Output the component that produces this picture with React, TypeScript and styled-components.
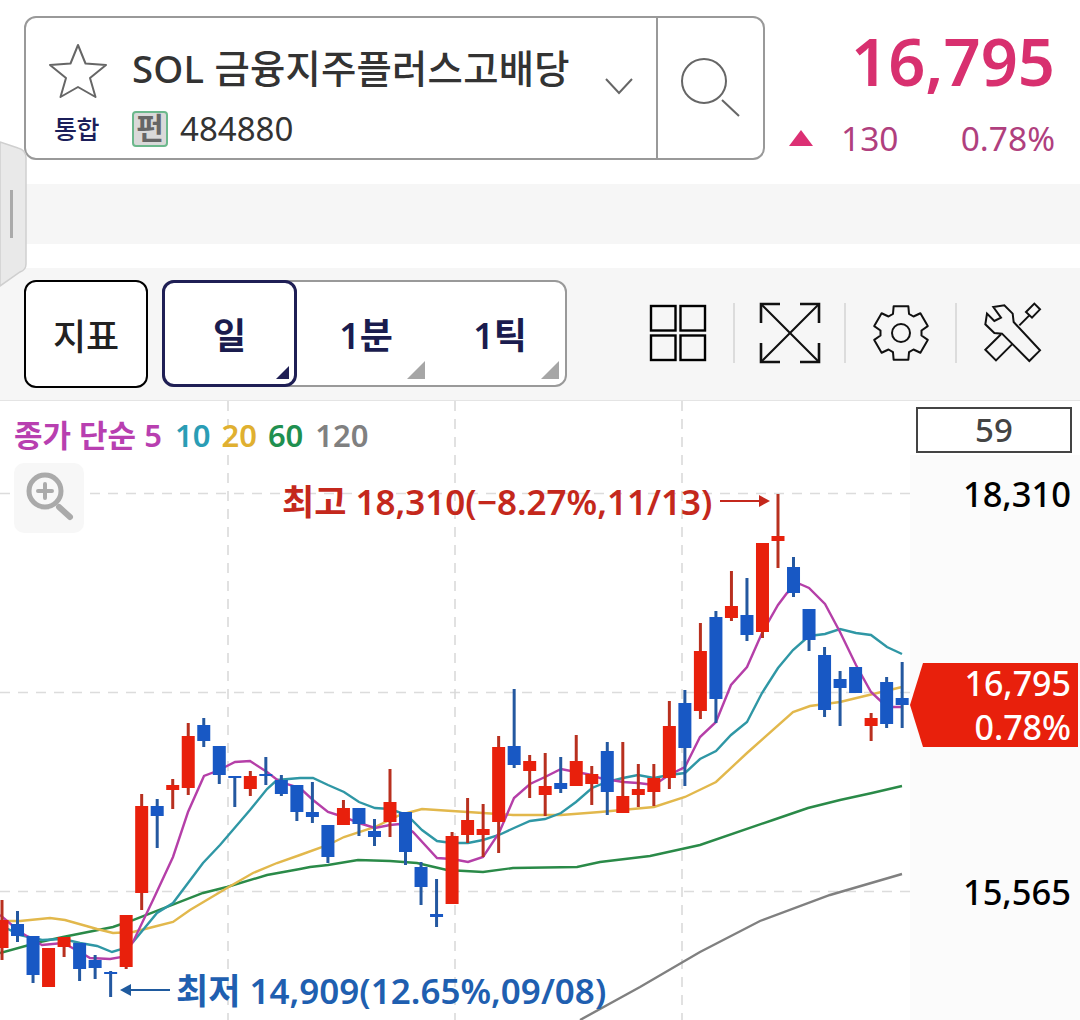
import React from "react";
import styled, { createGlobalStyle } from "styled-components";

const FONT = `"Noto Sans", "Noto Sans CJK KR", sans-serif`;
const RED = "#e8200c";
const BLUE = "#1858c4";

const GlobalStyle = createGlobalStyle`
  html, body {
    margin: 0;
    padding: 0;
    background: #fff;
    font-family: ${FONT};
  }
`;

// wick top, wick bottom, body top, body bottom, colour
type Candle = [number, number, number, number, "r" | "b"];

const CANDLES: Candle[] = [
  [900, 960, 920, 948, "r"], [911, 942, 924, 936, "b"], [936, 983, 936, 975, "b"],
  [948, 987, 948, 987, "r"], [937, 957, 937, 947, "r"], [943, 981, 943, 969, "b"],
  [955, 979, 960, 968, "b"], [971, 997, 972, 974, "b"], [915, 969, 915, 967, "r"],
  [794, 910, 806, 893, "r"], [799, 848, 806, 816, "b"], [779, 809, 785, 790, "r"],
  [723, 795, 736, 788, "r"], [718, 747, 725, 741, "b"], [746, 784, 746, 775, "b"],
  [776, 807, 776, 778, "b"], [771, 796, 776, 789, "r"], [757, 785, 774, 776, "b"],
  [775, 796, 780, 794, "b"], [785, 821, 785, 812, "b"], [782, 823, 812, 817, "b"],
  [825, 863, 825, 857, "b"], [800, 825, 808, 825, "r"], [808, 836, 808, 824, "b"],
  [819, 846, 831, 837, "b"], [769, 837, 802, 822, "r"], [812, 865, 812, 852, "b"],
  [862, 905, 867, 887, "b"], [879, 927, 914, 917, "b"], [832, 904, 836, 904, "r"],
  [798, 843, 820, 835, "r"], [804, 857, 829, 835, "r"], [736, 853, 747, 822, "r"],
  [689, 768, 746, 765, "b"], [755, 798, 761, 771, "r"], [753, 816, 786, 795, "r"],
  [757, 793, 783, 789, "b"], [735, 786, 761, 786, "r"], [766, 805, 774, 784, "r"],
  [742, 815, 751, 792, "b"], [742, 813, 796, 813, "r"], [764, 807, 789, 795, "r"],
  [764, 806, 778, 792, "r"], [701, 789, 726, 778, "r"], [690, 786, 703, 748, "b"],
  [623, 719, 651, 711, "r"], [611, 723, 617, 699, "b"], [571, 621, 606, 618, "r"],
  [578, 641, 615, 635, "b"], [543, 638, 543, 632, "r"], [494, 568, 536, 541, "r"],
  [557, 597, 567, 593, "b"], [609, 651, 609, 640, "b"], [647, 717, 655, 710, "b"],
  [671, 726, 679, 688, "b"], [667, 693, 667, 693, "b"], [713, 741, 718, 726, "r"],
  [677, 728, 682, 724, "b"], [662, 728, 698, 705, "b"],
];

const MA5 =
  "0,915 20,932 42,945 63,943 80,952 90,958 110,959 122,957 133,942 153,900 173,857 188,812 204,776 217,771 235,762 250,761 267,772 280,782 300,788 313,800 328,812 344,817 359,823 375,828 390,825 400,824 413,832 437,858 452,859 468,862 483,857 499,833 514,798 530,784 545,777 561,769 576,772 592,775 600,778 623,782 638,783 654,785 669,775 685,767 700,737 716,722 731,685 747,667 762,633 778,605 787,593 800,584 809,588 825,604 840,632 856,665 871,692 887,707 902,707";
const MA10 =
  "0,925 20,935 42,940 63,939 80,943 97,946 112,952 122,949 133,942 157,913 173,903 203,863 220,845 250,810 267,789 277,780 300,778 313,778 328,785 344,792 359,802 375,808 390,809 407,815 422,830 437,841 452,843 468,843 483,840 499,835 514,828 530,821 545,819 561,813 576,802 592,788 607,782 623,778 638,775 654,778 669,775 685,773 700,759 716,751 731,735 747,722 762,693 778,668 793,650 809,636 825,634 840,629 856,633 871,635 887,647 902,654";
const MA20 =
  "0,921 20,921 50,918 65,920 97,929 113,933 133,932 153,927 173,922 190,910 227,888 253,873 277,863 300,855 328,845 344,837 375,827 400,815 422,809 452,811 483,813 513,815 561,815 600,812 654,807 685,797 716,782 747,753 793,712 810,706 840,702 902,687";
const MA60 =
  "0,953 40,942 63,937 113,927 133,920 203,893 227,887 267,875 300,869 310,867 328,865 358,860 390,861 417,863 447,870 483,872 513,868 577,867 600,862 650,856 700,845 773,820 808,808 840,800 872,793 902,786";
const MA120 = "580,1020 640,987 700,952 760,921 830,895 902,874";

const gearPath = () => {
  const pts: string[] = [];
  for (let i = 0; i < 6; i++) {
    const a = -Math.PI / 2 + (i * Math.PI) / 3;
    [
      [62, -0.4],
      [83, -0.27],
      [83, 0.27],
      [62, 0.4],
    ].forEach(([r, d]) => {
      pts.push(`${(108 + r * Math.cos(a + d)).toFixed(1)} ${(108 + r * Math.sin(a + d)).toFixed(1)}`);
    });
  }
  return `M${pts.join("L")}Z`;
};

const Page = styled.div`
  width: 1080px;
  height: 1020px;
  position: relative;
  overflow: hidden;
  background: #fff;
`;

const Header = styled.header`
  display: flex;
  height: 184px;
  box-sizing: border-box;
  padding: 16px 25px 0 24px;
`;

const SearchBox = styled.div`
  width: 741px;
  height: 144px;
  box-sizing: border-box;
  border: 2px solid #999;
  border-radius: 12px;
  display: flex;
  background: #fff;
`;

const StockInfo = styled.div`
  flex: 1;
  display: grid;
  grid-template-columns: 106px 1fr 64px;
  grid-template-rows: 93px 1fr;
`;

const StarCell = styled.div`
  padding: 25px 0 0 22px;
`;

const StockName = styled.div`
  font-size: 38.4px;
  line-height: 50px;
  font-weight: 500;
  color: #333;
  padding-top: 25px;
  white-space: nowrap;
  letter-spacing: 0.2px;
`;

const ChevronCell = styled.div`
  display: flex;
  align-items: flex-end;
  padding: 0 0 16px 12px;
`;

const MarketLabel = styled.div`
  font-size: 25px;
  font-weight: 500;
  color: #1b1e5a;
  padding: 0 0 0 28px;
  line-height: 40px;
  margin-top: -2px;
  letter-spacing: -0.5px;
`;

const CodeRow = styled.div`
  display: flex;
  align-items: flex-start;
  gap: 12px;
`;

const Badge = styled.span`
  width: 36px;
  height: 36px;
  box-sizing: border-box;
  border: 2px solid #6cb88c;
  border-radius: 4px;
  background: #d9d9d9;
  color: #666;
  font-size: 30px;
  font-weight: 700;
  line-height: 30px;
  text-align: center;
`;

const StockCode = styled.span`
  font-size: 33px;
  line-height: 36px;
  color: #333;
`;

const SearchButton = styled.div`
  width: 105px;
  border-left: 2px solid #999;
  display: flex;
  align-items: center;
  justify-content: center;
`;

const PriceBlock = styled.div`
  flex: 1;
  display: flex;
  flex-direction: column;
  align-items: flex-end;
`;

const BigPrice = styled.div`
  font-size: 65px;
  line-height: 90px;
  font-weight: 600;
  color: #d8306f;
`;

const ChangeRow = styled.div`
  width: 266px;
  margin-top: 10px;
  display: flex;
  align-items: center;
  font-size: 33.5px;
  line-height: 44px;
  color: #b03f7e;
`;

const UpMark = styled.span`
  width: 0;
  height: 0;
  border-left: 12px solid transparent;
  border-right: 12px solid transparent;
  border-bottom: 16px solid #dc3074;
  margin-right: 28px;
`;

const Percent = styled.span`
  margin-left: auto;
`;

const Band = styled.div`
  height: 60px;
  background: #f6f6f6;
  margin-bottom: 24px;
`;

const Toolbar = styled.div`
  height: 133px;
  box-sizing: border-box;
  background: #f6f6f6;
  border-bottom: 1px solid #e4e4e4;
  padding: 12px 0 0 24px;
  display: flex;
  align-items: flex-start;
`;

const IndicatorButton = styled.div`
  width: 124px;
  height: 108px;
  box-sizing: border-box;
  border: 2px solid #000;
  border-radius: 12px;
  background: #fff;
  font-size: 36px;
  font-weight: 500;
  color: #222;
  display: flex;
  align-items: center;
  justify-content: center;
  margin-right: 14px;
`;

const PeriodGroup = styled.div`
  width: 405px;
  height: 107px;
  box-sizing: border-box;
  border: 2px solid #999;
  border-radius: 12px;
  background: #fff;
  display: flex;
`;

const PeriodTab = styled.div<{ $active?: boolean }>`
  position: relative;
  box-sizing: border-box;
  width: ${(p) => (p.$active ? "135px" : "134px")};
  margin: ${(p) => (p.$active ? "-2px 0 -2px -2px" : "0")};
  border: ${(p) => (p.$active ? "3px solid #1f1f55" : "0")};
  border-radius: 12px;
  font-size: 36px;
  font-weight: 600;
  color: #1a1c4e;
  display: flex;
  align-items: center;
  justify-content: center;
  padding-left: ${(p) => (p.$active ? "0" : "4px")};

  &::after {
    content: "";
    position: absolute;
    right: ${(p) => (p.$active ? "5px" : "6px")};
    bottom: ${(p) => (p.$active ? "5px" : "6px")};
    width: 0;
    height: 0;
    border-left: ${(p) => (p.$active ? "13px" : "18px")} solid transparent;
    border-bottom: ${(p) => (p.$active ? "13px" : "18px")} solid
      ${(p) => (p.$active ? "#1f1f55" : "#a6a6a6")};
  }
`;

const ToolIcons = styled.div`
  display: flex;
  align-items: center;
  height: 60px;
  margin: 23px 0 0 55px;
`;

const ToolSlot = styled.div<{ $first?: boolean }>`
  height: 60px;
  display: flex;
  align-items: center;
  justify-content: center;
  width: 111px;
  border-left: ${(p) => (p.$first ? "0" : "2px solid #dcdcdc")};
  box-sizing: border-box;
`;

const ChartArea = styled.section`
  position: relative;
  height: 619px;
`;

const ChartSvg = styled.svg`
  display: block;
`;

const Legend = styled.div`
  position: absolute;
  left: 14px;
  top: 12px;
  display: flex;
  font-size: 31px;
  line-height: 44px;
  font-weight: 600;
  white-space: nowrap;
`;

const LegendItem = styled.span<{ $color: string; $gap?: number }>`
  color: ${(p) => p.$color};
  margin-left: ${(p) => p.$gap ?? 0}px;
`;

const ZoomButton = styled.div`
  position: absolute;
  left: 14px;
  top: 62px;
  width: 70px;
  height: 70px;
  border-radius: 10px;
  background: #f7f7f7;
  display: flex;
  align-items: center;
  justify-content: center;
`;

const CountBox = styled.div`
  position: absolute;
  left: 916px;
  top: 6px;
  width: 156px;
  height: 46px;
  box-sizing: border-box;
  border: 2px solid #444;
  background: #fff;
  color: #444;
  font-size: 33px;
  font-weight: 500;
  line-height: 42px;
  text-align: center;
`;

const AxisLabel = styled.div<{ $top: number }>`
  position: absolute;
  right: 9px;
  top: ${(p) => p.$top}px;
  font-size: 34.5px;
  line-height: 44px;
  font-weight: 500;
  color: #000;
`;

const Note = styled.div<{ $color: string; $left: number; $top: number }>`
  position: absolute;
  left: ${(p) => p.$left}px;
  top: ${(p) => p.$top}px;
  font-size: 35px;
  line-height: 44px;
  font-weight: 600;
  color: ${(p) => p.$color};
  white-space: nowrap;
`;

const PriceTag = styled.div`
  position: absolute;
  left: 910px;
  top: 262px;
  width: 168px;
  height: 84px;
  box-sizing: border-box;
  padding-right: 7px;
  background: ${RED};
  clip-path: polygon(13px 0, 100% 0, 100% 100%, 13px 100%, 0 50%);
  color: #fff;
  font-size: 34px;
  font-weight: 500;
  display: flex;
  flex-direction: column;
  align-items: flex-end;
  gap: 4px;
`;

const TagLine = styled.span`
  line-height: 40px;
`;

const SideHandle = styled.svg`
  position: absolute;
  left: 0;
  top: 140px;
`;

const Chart = () => (
  <ChartSvg width={1080} height={619} viewBox="0 401 1080 619">
    <rect x={910} y={455} width={170} height={565} fill="#fbfbfb" />
    {[493.5, 692.5, 891.5].map((y) => (
      <line key={y} x1={0} x2={910} y1={y} y2={y} stroke="#dcdcdc" strokeWidth={1.5} strokeDasharray="10 8" />
    ))}
    {[228, 455, 682].map((x) => (
      <line key={x} x1={x} x2={x} y1={401} y2={1020} stroke="#d8d8d8" strokeWidth={1.5} strokeDasharray="10 8" />
    ))}
    <polyline points={MA120} fill="none" stroke="#808080" strokeWidth={2.4} />
    <polyline points={MA60} fill="none" stroke="#2a8a48" strokeWidth={2.4} />
    <polyline points={MA20} fill="none" stroke="#e2b84c" strokeWidth={2.4} />
    <polyline points={MA10} fill="none" stroke="#2f97a5" strokeWidth={2.4} />
    <polyline points={MA5} fill="none" stroke="#b53fa8" strokeWidth={2.4} />
    {CANDLES.map(([wt, wb, bt, bb, c], i) => {
      const x = 2 + i * 15.52;
      return (
        <g key={i}>
          <line x1={x} x2={x} y1={wt} y2={wb} stroke={c === "r" ? "#b8301f" : "#2458a0"} strokeWidth={3} />
          <rect x={x - 6.5} y={bt} width={13} height={bb - bt} fill={c === "r" ? RED : BLUE} />
        </g>
      );
    })}
    <g stroke="#c4281c" fill="#c4281c" strokeWidth={2}>
      <line x1={720} x2={760} y1={501} y2={501} />
      <polygon points="770,501 759,495 759,507" stroke="none" />
    </g>
    <g stroke="#1f5a9e" fill="#1f5a9e" strokeWidth={2}>
      <line x1={130} x2={170} y1={990} y2={990} />
      <polygon points="120,990 131,984 131,996" stroke="none" />
    </g>
  </ChartSvg>
);

export default function App() {
  return (
    <Page>
      <GlobalStyle />
      <Header>
        <SearchBox>
          <StockInfo>
            <StarCell>
              <svg width="60" height="56" viewBox="0 0 60 56">
                <path
                  d="M30 2 L37.5 20.5 L58 22 L42 35 L47.5 54 L30 44 L12.5 54 L18 35 L2 22 L22.5 20.5 Z"
                  fill="none"
                  stroke="#666"
                  strokeWidth="2"
                  strokeLinejoin="round"
                />
              </svg>
            </StarCell>
            <StockName>SOL 금융지주플러스고배당</StockName>
            <ChevronCell>
              <svg width="30" height="18" viewBox="0 0 30 18">
                <path d="M2 2 L15 16 L28 2" fill="none" stroke="#666" strokeWidth="2" />
              </svg>
            </ChevronCell>
            <MarketLabel>통합</MarketLabel>
            <CodeRow>
              <Badge>펀</Badge>
              <StockCode>484880</StockCode>
            </CodeRow>
          </StockInfo>
          <SearchButton>
            <svg width="64" height="64" viewBox="0 0 64 64">
              <circle cx="25" cy="25" r="22" fill="none" stroke="#666" strokeWidth="2" />
              <line x1="43" y1="44" x2="60" y2="60" stroke="#666" strokeWidth="2" />
            </svg>
          </SearchButton>
        </SearchBox>
        <PriceBlock>
          <BigPrice>16,795</BigPrice>
          <ChangeRow>
            <UpMark />
            <span>130</span>
            <Percent>0.78%</Percent>
          </ChangeRow>
        </PriceBlock>
      </Header>
      <Band />
      <Toolbar>
        <IndicatorButton>지표</IndicatorButton>
        <PeriodGroup>
          <PeriodTab $active>일</PeriodTab>
          <PeriodTab>1분</PeriodTab>
          <PeriodTab>1틱</PeriodTab>
        </PeriodGroup>
        <ToolIcons>
          <ToolSlot $first>
            <svg width="58" height="58" viewBox="0 0 58 58" fill="none" stroke="#000" strokeWidth="2.4">
              <rect x="2" y="2" width="24.5" height="24.5" />
              <rect x="31.5" y="2" width="24.5" height="24.5" />
              <rect x="2" y="31.5" width="24.5" height="24.5" />
              <rect x="31.5" y="31.5" width="24.5" height="24.5" />
            </svg>
          </ToolSlot>
          <ToolSlot>
            <svg width="62" height="62" viewBox="0 0 62 62" fill="none" stroke="#111" strokeWidth="2">
              <path d="M21 2 H2 V21 M41 2 H60 V21 M2 41 V60 H21 M60 41 V60 H41" strokeWidth="2.6" />
              <path d="M2 2 L60 60 M60 2 L2 60" />
            </svg>
          </ToolSlot>
          <ToolSlot>
            <svg width="72" height="72" viewBox="0 0 216 216" fill="none" stroke="#111" strokeWidth="6" strokeLinejoin="round">
              <path d={gearPath()} />
              <circle cx="108" cy="108" r="27" />
            </svg>
          </ToolSlot>
          <ToolSlot>
            <svg width="72" height="72" viewBox="0 0 216 216" fill="none" stroke="#111" strokeWidth="6" strokeLinejoin="miter">
              <path d="M52 30 L85 25 L110 50 L113 75 L192 160 L160 192 L78 110 L55 108 L28 82 L33 50 L55 72 L75 62 Z" />
              <path d="M75 112 L28 158 L60 190 L108 142" />
              <path d="M130 85 L160 55 M150 45 L175 20 L192 37 L168 62 Z" />
            </svg>
          </ToolSlot>
        </ToolIcons>
      </Toolbar>
      <ChartArea>
        <Chart />
        <Legend>
          <LegendItem $color="#b83fb0">종가 단순 5</LegendItem>
          <LegendItem $color="#2a9db5" $gap={13}>10</LegendItem>
          <LegendItem $color="#e0b030" $gap={11}>20</LegendItem>
          <LegendItem $color="#1f9050" $gap={11}>60</LegendItem>
          <LegendItem $color="#808080" $gap={12}>120</LegendItem>
        </Legend>
        <ZoomButton>
          <svg width="52" height="58" viewBox="0 0 52 58" fill="none" stroke="#aaa">
            <circle cx="22" cy="22" r="16" strokeWidth="5" />
            <path d="M22 15 V29 M15 22 H29" strokeWidth="4" strokeLinecap="round" />
            <path d="M36 38 L47 48" strokeWidth="6" strokeLinecap="round" />
          </svg>
        </ZoomButton>
        <CountBox>59</CountBox>
        <AxisLabel $top={71}>18,310</AxisLabel>
        <AxisLabel $top={469}>15,565</AxisLabel>
        <Note $color="#c4281c" $left={282} $top={79}>최고 18,310(−8.27%,11/13)</Note>
        <Note $color="#1f5fb0" $left={176} $top={568}>최저 14,909(12.65%,09/08)</Note>
        <PriceTag>
          <TagLine>16,795</TagLine>
          <TagLine>0.78%</TagLine>
        </PriceTag>
      </ChartArea>
      <SideHandle width="28" height="148" viewBox="0 0 28 148">
        <path
          d="M0 2 L18 8 Q26 10 26 18 V124 Q26 130 20 132 L0 146 Z"
          fill="#e9e9e9"
          stroke="#cfcfcf"
          strokeWidth="1.5"
        />
        <rect x="10" y="50" width="3" height="48" fill="#aaa" />
      </SideHandle>
    </Page>
  );
}
